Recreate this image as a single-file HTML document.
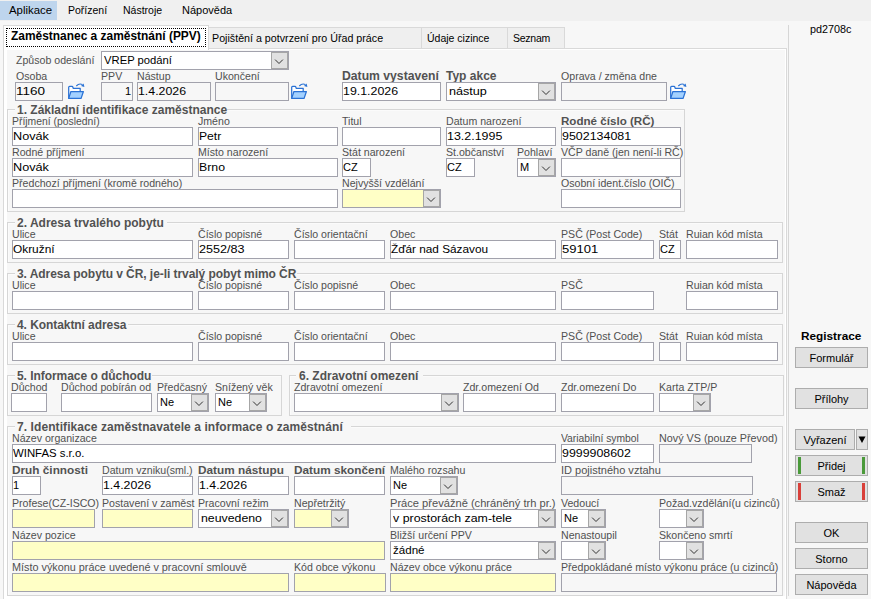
<!DOCTYPE html>
<html><head><meta charset="utf-8"><style>
html,body{margin:0;padding:0;width:871px;height:599px;overflow:hidden;background:#f7f7f7;position:relative}
.a{position:absolute;box-sizing:border-box}
.t{position:absolute;white-space:nowrap;line-height:20px;font-family:"Liberation Sans", sans-serif}
</style></head><body>
<div class="a" style="left:0px;top:0px;width:871px;height:21px;background:#f0f0f0;"></div><div class="a" style="left:0px;top:1px;width:57px;height:19px;background:#bed5ed;"></div><div class="t" style="left:9px;top:0px;font-size:11.4px;color:#000;">Aplikace</div><div class="t" style="left:68px;top:0px;font-size:10.5px;color:#000;">Pořízení</div><div class="t" style="left:123px;top:0px;font-size:10.5px;color:#000;">Nástroje</div><div class="t" style="left:182px;top:0px;font-size:11px;color:#000;">Nápověda</div><div class="a" style="left:788px;top:25px;width:1px;height:571px;background:#d6d6d6;"></div><div class="t" style="left:810px;top:19px;font-size:10.8px;color:#000;">pd2708c</div><div class="a" style="left:208px;top:27px;width:214px;height:22px;background:#efefef;border:1px solid #d9d9d9;"></div><div class="a" style="left:421px;top:27px;width:87px;height:22px;background:#efefef;border:1px solid #d9d9d9;"></div><div class="a" style="left:507px;top:27px;width:58px;height:22px;background:#efefef;border:1px solid #d9d9d9;"></div><div class="t" style="left:212px;top:28px;font-size:10.7px;color:#000;">Pojištění a potvrzení pro Úřad práce</div><div class="t" style="left:427px;top:28px;font-size:10.5px;color:#000;">Údaje cizince</div><div class="t" style="left:513px;top:28px;font-size:10.5px;color:#000;letter-spacing:-0.25px;">Seznam</div><div class="a" style="left:3px;top:48px;width:784px;height:593px;background:#fff;border:1px solid #d9d9d9;"></div><div class="a" style="left:7px;top:50px;width:778px;height:546px;background:#f7f7f7;"></div><div class="a" style="left:3px;top:25px;width:206px;height:25px;background:#fff;border:1px solid #d9d9d9;border-bottom:none;box-sizing:border-box"></div><div class="a" style="left:6px;top:28px;width:200px;height:19px;border:1px dotted #000;box-sizing:border-box"></div><div class="t" style="left:11px;top:26px;font-size:11.95px;color:#000;font-weight:bold;">Zaměstnanec a zaměstnání (PPV)</div><div class="t" style="left:16px;top:50px;font-size:10.6px;color:#505050;">Způsob odeslání</div><div class="a" style="left:101px;top:51px;width:188px;height:19px;background:#fff;border:1px solid #a2a2ac;"></div><div class="a" style="left:271px;top:52px;width:17px;height:17px;background:#e1e1e1;border:1px solid #a6a6a6;box-sizing:border-box"></div><svg class="a" style="left:271px;top:52px" width="17" height="17"><polyline points="4.1,7.6 8,11.5 11.9,7.6" fill="none" stroke="#333" stroke-width="1"/></svg><div class="t" style="left:104px;top:50px;font-size:11px;color:#000;transform:scaleX(1.023);transform-origin:0 0;">VREP podání</div><div class="t" style="left:16px;top:66px;font-size:10.6px;color:#505050;">Osoba</div><div class="a" style="left:15px;top:82px;width:48px;height:19px;background:#f7f7f7;border:1px solid #a2a2ac;"></div><div class="t" style="left:16px;top:81px;font-size:11px;color:#000;transform:scaleX(1.227);transform-origin:0 0;">1160</div><svg class="a" style="left:68px;top:82px" width="17" height="17" viewBox="0 0 17 17">
<path d="M0.7,16.4 V5.3 Q0.7,4.4 1.6,4.4 H4.1 Q4.6,4.4 4.8,5 L5.2,6.3 H12.2 V9.2" fill="#fff" stroke="#2a72d5" stroke-width="1.25" stroke-linejoin="round"/>
<path d="M0.7,16.4 L2.9,9.5 H15.4 L13.1,16.4 Z" fill="#a3d1ff" stroke="#2a72d5" stroke-width="1.25" stroke-linejoin="round"/>
<path d="M8.3,4.0 Q11.2,0.9 14.4,2.6" fill="none" stroke="#2a72d5" stroke-width="1.15"/>
<path d="M13.0,3.9 L16.4,5.0 L15.6,1.4 Z" fill="#2a72d5"/>
</svg><div class="t" style="left:101px;top:66px;font-size:10.6px;color:#505050;">PPV</div><div class="a" style="left:101px;top:82px;width:32px;height:19px;background:#f7f7f7;border:1px solid #a2a2ac;"></div><div class="t" style="left:101px;width:30px;text-align:right;top:81px;font-size:11px;color:#000">1</div><div class="t" style="left:137px;top:66px;font-size:10.6px;color:#505050;">Nástup</div><div class="a" style="left:137px;top:82px;width:74px;height:19px;background:#f7f7f7;border:1px solid #a2a2ac;"></div><div class="t" style="left:138px;top:81px;font-size:11px;color:#000;transform:scaleX(1.121);transform-origin:0 0;">1.4.2026</div><div class="t" style="left:215px;top:66px;font-size:10.6px;color:#505050;">Ukončení</div><div class="a" style="left:215px;top:82px;width:74px;height:19px;background:#f7f7f7;border:1px solid #a2a2ac;"></div><svg class="a" style="left:291px;top:82px" width="17" height="17" viewBox="0 0 17 17">
<path d="M0.7,16.4 V5.3 Q0.7,4.4 1.6,4.4 H4.1 Q4.6,4.4 4.8,5 L5.2,6.3 H12.2 V9.2" fill="#fff" stroke="#2a72d5" stroke-width="1.25" stroke-linejoin="round"/>
<path d="M0.7,16.4 L2.9,9.5 H15.4 L13.1,16.4 Z" fill="#a3d1ff" stroke="#2a72d5" stroke-width="1.25" stroke-linejoin="round"/>
<path d="M8.3,4.0 Q11.2,0.9 14.4,2.6" fill="none" stroke="#2a72d5" stroke-width="1.15"/>
<path d="M13.0,3.9 L16.4,5.0 L15.6,1.4 Z" fill="#2a72d5"/>
</svg><div class="t" style="left:342px;top:66px;font-size:12.2px;color:#525252;font-weight:bold;">Datum vystavení</div><div class="a" style="left:342px;top:82px;width:99px;height:19px;background:#fff;border:1px solid #a2a2ac;"></div><div class="t" style="left:343px;top:81px;font-size:11px;color:#000;transform:scaleX(1.125);transform-origin:0 0;">19.1.2026</div><div class="t" style="left:446px;top:66px;font-size:12px;color:#525252;font-weight:bold;">Typ akce</div><div class="a" style="left:446px;top:82px;width:110px;height:19px;background:#fff;border:1px solid #a2a2ac;"></div><div class="a" style="left:538px;top:83px;width:17px;height:17px;background:#e1e1e1;border:1px solid #a6a6a6;box-sizing:border-box"></div><svg class="a" style="left:538px;top:83px" width="17" height="17"><polyline points="4.1,7.6 8,11.5 11.9,7.6" fill="none" stroke="#333" stroke-width="1"/></svg><div class="t" style="left:449px;top:81px;font-size:11px;color:#000;transform:scaleX(1.147);transform-origin:0 0;">nástup</div><div class="t" style="left:561px;top:66px;font-size:10.6px;color:#505050;">Oprava / změna dne</div><div class="a" style="left:561px;top:82px;width:106px;height:19px;background:#f7f7f7;border:1px solid #a2a2ac;"></div><svg class="a" style="left:670px;top:82px" width="17" height="17" viewBox="0 0 17 17">
<path d="M0.7,16.4 V5.3 Q0.7,4.4 1.6,4.4 H4.1 Q4.6,4.4 4.8,5 L5.2,6.3 H12.2 V9.2" fill="#fff" stroke="#2a72d5" stroke-width="1.25" stroke-linejoin="round"/>
<path d="M0.7,16.4 L2.9,9.5 H15.4 L13.1,16.4 Z" fill="#a3d1ff" stroke="#2a72d5" stroke-width="1.25" stroke-linejoin="round"/>
<path d="M8.3,4.0 Q11.2,0.9 14.4,2.6" fill="none" stroke="#2a72d5" stroke-width="1.15"/>
<path d="M13.0,3.9 L16.4,5.0 L15.6,1.4 Z" fill="#2a72d5"/>
</svg><div class="a" style="left:7px;top:109px;width:678px;height:103px;border:1px solid #d6d6d6;box-shadow:inset 1px 1px 0 #fbfbfb"></div><div class="a" style="left:15px;top:103px;width:212px;height:12px;background:#f7f7f7"></div><div class="t" style="left:17px;top:100px;font-size:12px;color:#525252;font-weight:bold;letter-spacing:0px;">1. Základní identifikace zaměstnance</div><div class="t" style="left:12px;top:111px;font-size:10.6px;color:#505050;transform:scaleX(0.98);transform-origin:0 0;">Příjmení (poslední)</div><div class="a" style="left:12px;top:127px;width:181px;height:19px;background:#fff;border:1px solid #a2a2ac;"></div><div class="t" style="left:13px;top:126px;font-size:11px;color:#000;transform:scaleX(1.153);transform-origin:0 0;">Novák</div><div class="t" style="left:198px;top:111px;font-size:10.6px;color:#505050;">Jméno</div><div class="a" style="left:198px;top:127px;width:140px;height:19px;background:#fff;border:1px solid #a2a2ac;"></div><div class="t" style="left:199px;top:126px;font-size:11px;color:#000;transform:scaleX(1.105);transform-origin:0 0;">Petr</div><div class="t" style="left:342px;top:111px;font-size:10.6px;color:#505050;">Titul</div><div class="a" style="left:342px;top:127px;width:99px;height:19px;background:#fff;border:1px solid #a2a2ac;"></div><div class="t" style="left:446px;top:111px;font-size:10.6px;color:#505050;">Datum narození</div><div class="a" style="left:446px;top:127px;width:110px;height:19px;background:#fff;border:1px solid #a2a2ac;"></div><div class="t" style="left:447px;top:126px;font-size:11px;color:#000;transform:scaleX(1.131);transform-origin:0 0;">13.2.1995</div><div class="t" style="left:561px;top:111px;font-size:11.6px;color:#525252;font-weight:bold;">Rodné číslo (RČ)</div><div class="a" style="left:561px;top:127px;width:120px;height:19px;background:#fff;border:1px solid #a2a2ac;"></div><div class="t" style="left:562px;top:126px;font-size:11px;color:#000;transform:scaleX(1.131);transform-origin:0 0;">9502134081</div><div class="t" style="left:12px;top:142px;font-size:10.6px;color:#505050;">Rodné příjmení</div><div class="a" style="left:12px;top:158px;width:181px;height:19px;background:#fff;border:1px solid #a2a2ac;"></div><div class="t" style="left:13px;top:157px;font-size:11px;color:#000;transform:scaleX(1.153);transform-origin:0 0;">Novák</div><div class="t" style="left:198px;top:142px;font-size:10.6px;color:#505050;">Místo narození</div><div class="a" style="left:198px;top:158px;width:140px;height:19px;background:#fff;border:1px solid #a2a2ac;"></div><div class="t" style="left:199px;top:157px;font-size:11px;color:#000;transform:scaleX(1.118);transform-origin:0 0;">Brno</div><div class="t" style="left:342px;top:142px;font-size:10.6px;color:#505050;">Stát narození</div><div class="a" style="left:342px;top:158px;width:29px;height:19px;background:#fff;border:1px solid #a2a2ac;"></div><div class="t" style="left:343px;top:157px;font-size:11px;color:#000;transform:scaleX(1.0);transform-origin:0 0;">CZ</div><div class="t" style="left:446px;top:142px;font-size:10.6px;color:#505050;">St.občanství</div><div class="a" style="left:446px;top:158px;width:29px;height:19px;background:#fff;border:1px solid #a2a2ac;"></div><div class="t" style="left:447px;top:157px;font-size:11px;color:#000;transform:scaleX(1.0);transform-origin:0 0;">CZ</div><div class="t" style="left:517px;top:142px;font-size:10.6px;color:#505050;">Pohlaví</div><div class="a" style="left:517px;top:158px;width:39px;height:19px;background:#fff;border:1px solid #a2a2ac;"></div><div class="a" style="left:538px;top:159px;width:17px;height:17px;background:#e1e1e1;border:1px solid #a6a6a6;box-sizing:border-box"></div><svg class="a" style="left:538px;top:159px" width="17" height="17"><polyline points="4.1,7.6 8,11.5 11.9,7.6" fill="none" stroke="#333" stroke-width="1"/></svg><div class="t" style="left:520px;top:157px;font-size:11px;color:#000;transform:scaleX(1.0);transform-origin:0 0;">M</div><div class="t" style="left:561px;top:142px;font-size:10.6px;color:#505050;">VČP daně (jen není-li RČ)</div><div class="a" style="left:561px;top:158px;width:120px;height:19px;background:#fff;border:1px solid #a2a2ac;"></div><div class="t" style="left:12px;top:173px;font-size:10.6px;color:#505050;">Předchozí příjmení (kromě rodného)</div><div class="a" style="left:12px;top:189px;width:326px;height:19px;background:#fff;border:1px solid #a2a2ac;"></div><div class="t" style="left:342px;top:173px;font-size:10.6px;color:#505050;">Nejvyšší vzdělání</div><div class="a" style="left:342px;top:189px;width:99px;height:19px;background:#ffffc6;border:1px solid #a2a2ac;"></div><div class="a" style="left:423px;top:190px;width:17px;height:17px;background:#e1e1e1;border:1px solid #a6a6a6;box-sizing:border-box"></div><svg class="a" style="left:423px;top:190px" width="17" height="17"><polyline points="4.1,7.6 8,11.5 11.9,7.6" fill="none" stroke="#333" stroke-width="1"/></svg><div class="t" style="left:561px;top:173px;font-size:10.6px;color:#505050;">Osobní ident.číslo (OIČ)</div><div class="a" style="left:561px;top:189px;width:120px;height:19px;background:#fff;border:1px solid #a2a2ac;"></div><div class="a" style="left:7px;top:222px;width:776px;height:41px;border:1px solid #d6d6d6;box-shadow:inset 1px 1px 0 #fbfbfb"></div><div class="a" style="left:15px;top:216px;width:152px;height:12px;background:#f7f7f7"></div><div class="t" style="left:17px;top:213px;font-size:12px;color:#525252;font-weight:bold;letter-spacing:0px;">2. Adresa trvalého pobytu</div><div class="t" style="left:12px;top:224px;font-size:10.6px;color:#505050;">Ulice</div><div class="a" style="left:12px;top:240px;width:181px;height:19px;background:#fff;border:1px solid #a2a2ac;"></div><div class="t" style="left:13px;top:239px;font-size:11px;color:#000;transform:scaleX(1.079);transform-origin:0 0;">Okružní</div><div class="t" style="left:198px;top:224px;font-size:10.6px;color:#505050;">Číslo popisné</div><div class="a" style="left:198px;top:240px;width:91px;height:19px;background:#fff;border:1px solid #a2a2ac;"></div><div class="t" style="left:199px;top:239px;font-size:11px;color:#000;transform:scaleX(1.145);transform-origin:0 0;">2552/83</div><div class="t" style="left:294px;top:224px;font-size:10.6px;color:#505050;">Číslo orientační</div><div class="a" style="left:294px;top:240px;width:91px;height:19px;background:#fff;border:1px solid #a2a2ac;"></div><div class="t" style="left:390px;top:224px;font-size:10.6px;color:#505050;">Obec</div><div class="a" style="left:390px;top:240px;width:166px;height:19px;background:#fff;border:1px solid #a2a2ac;"></div><div class="t" style="left:391px;top:239px;font-size:11px;color:#000;transform:scaleX(1.072);transform-origin:0 0;">Žďár nad Sázavou</div><div class="t" style="left:561px;top:224px;font-size:10.6px;color:#505050;">PSČ (Post Code)</div><div class="a" style="left:561px;top:240px;width:93px;height:19px;background:#fff;border:1px solid #a2a2ac;"></div><div class="t" style="left:562px;top:239px;font-size:11px;color:#000;transform:scaleX(1.186);transform-origin:0 0;">59101</div><div class="t" style="left:659px;top:224px;font-size:10.6px;color:#505050;">Stát</div><div class="a" style="left:659px;top:240px;width:22px;height:19px;background:#fff;border:1px solid #a2a2ac;"></div><div class="t" style="left:660px;top:239px;font-size:11px;color:#000;transform:scaleX(1.0);transform-origin:0 0;">CZ</div><div class="t" style="left:686px;top:224px;font-size:10.6px;color:#505050;">Ruian kód místa</div><div class="a" style="left:686px;top:240px;width:92px;height:19px;background:#fff;border:1px solid #a2a2ac;"></div><div class="a" style="left:7px;top:273px;width:776px;height:41px;border:1px solid #d6d6d6;box-shadow:inset 1px 1px 0 #fbfbfb"></div><div class="a" style="left:15px;top:267px;width:282px;height:12px;background:#f7f7f7"></div><div class="t" style="left:17px;top:264px;font-size:12px;color:#525252;font-weight:bold;letter-spacing:-0.06px;">3. Adresa pobytu v ČR, je-li trvalý pobyt mimo ČR</div><div class="t" style="left:12px;top:275px;font-size:10.6px;color:#505050;">Ulice</div><div class="a" style="left:12px;top:291px;width:181px;height:19px;background:#fff;border:1px solid #a2a2ac;"></div><div class="t" style="left:198px;top:275px;font-size:10.6px;color:#505050;">Číslo popisné</div><div class="a" style="left:198px;top:291px;width:91px;height:19px;background:#fff;border:1px solid #a2a2ac;"></div><div class="t" style="left:294px;top:275px;font-size:10.6px;color:#505050;">Číslo popisné</div><div class="a" style="left:294px;top:291px;width:91px;height:19px;background:#fff;border:1px solid #a2a2ac;"></div><div class="t" style="left:390px;top:275px;font-size:10.6px;color:#505050;">Obec</div><div class="a" style="left:390px;top:291px;width:166px;height:19px;background:#fff;border:1px solid #a2a2ac;"></div><div class="t" style="left:561px;top:275px;font-size:10.6px;color:#505050;">PSČ</div><div class="a" style="left:561px;top:291px;width:93px;height:19px;background:#fff;border:1px solid #a2a2ac;"></div><div class="t" style="left:686px;top:275px;font-size:10.6px;color:#505050;">Ruian kód místa</div><div class="a" style="left:686px;top:291px;width:92px;height:19px;background:#fff;border:1px solid #a2a2ac;"></div><div class="a" style="left:7px;top:324px;width:776px;height:41px;border:1px solid #d6d6d6;box-shadow:inset 1px 1px 0 #fbfbfb"></div><div class="a" style="left:15px;top:318px;width:113px;height:12px;background:#f7f7f7"></div><div class="t" style="left:17px;top:315px;font-size:12px;color:#525252;font-weight:bold;letter-spacing:-0.07px;">4. Kontaktní adresa</div><div class="t" style="left:12px;top:326px;font-size:10.6px;color:#505050;">Ulice</div><div class="a" style="left:12px;top:342px;width:181px;height:19px;background:#fff;border:1px solid #a2a2ac;"></div><div class="t" style="left:198px;top:326px;font-size:10.6px;color:#505050;">Číslo popisné</div><div class="a" style="left:198px;top:342px;width:91px;height:19px;background:#fff;border:1px solid #a2a2ac;"></div><div class="t" style="left:294px;top:326px;font-size:10.6px;color:#505050;">Číslo orientační</div><div class="a" style="left:294px;top:342px;width:91px;height:19px;background:#fff;border:1px solid #a2a2ac;"></div><div class="t" style="left:390px;top:326px;font-size:10.6px;color:#505050;">Obec</div><div class="a" style="left:390px;top:342px;width:166px;height:19px;background:#fff;border:1px solid #a2a2ac;"></div><div class="t" style="left:561px;top:326px;font-size:10.6px;color:#505050;">PSČ (Post Code)</div><div class="a" style="left:561px;top:342px;width:93px;height:19px;background:#fff;border:1px solid #a2a2ac;"></div><div class="t" style="left:659px;top:326px;font-size:10.6px;color:#505050;">Stát</div><div class="a" style="left:659px;top:342px;width:22px;height:19px;background:#fff;border:1px solid #a2a2ac;"></div><div class="t" style="left:686px;top:326px;font-size:10.6px;color:#505050;">Ruian kód místa</div><div class="a" style="left:686px;top:342px;width:92px;height:19px;background:#fff;border:1px solid #a2a2ac;"></div><div class="a" style="left:7px;top:375px;width:275px;height:41px;border:1px solid #d6d6d6;box-shadow:inset 1px 1px 0 #fbfbfb"></div><div class="a" style="left:15px;top:369px;width:137px;height:12px;background:#f7f7f7"></div><div class="t" style="left:17px;top:366px;font-size:12px;color:#525252;font-weight:bold;letter-spacing:-0.05px;">5. Informace o důchodu</div><div class="t" style="left:11px;top:377px;font-size:10.6px;color:#505050;">Důchod</div><div class="a" style="left:11px;top:393px;width:36px;height:19px;background:#fff;border:1px solid #a2a2ac;"></div><div class="t" style="left:61px;top:377px;font-size:10.6px;color:#505050;">Důchod pobírán od</div><div class="a" style="left:61px;top:393px;width:91px;height:19px;background:#fff;border:1px solid #a2a2ac;"></div><div class="t" style="left:157px;top:377px;font-size:10.6px;color:#505050;">Předčasný</div><div class="a" style="left:157px;top:393px;width:52px;height:19px;background:#fff;border:1px solid #a2a2ac;"></div><div class="a" style="left:191px;top:394px;width:17px;height:17px;background:#e1e1e1;border:1px solid #a6a6a6;box-sizing:border-box"></div><svg class="a" style="left:191px;top:394px" width="17" height="17"><polyline points="4.1,7.6 8,11.5 11.9,7.6" fill="none" stroke="#333" stroke-width="1"/></svg><div class="t" style="left:160px;top:392px;font-size:11px;color:#000;transform:scaleX(1.0);transform-origin:0 0;">Ne</div><div class="t" style="left:215px;top:377px;font-size:10.6px;color:#505050;">Snížený věk</div><div class="a" style="left:215px;top:393px;width:52px;height:19px;background:#fff;border:1px solid #a2a2ac;"></div><div class="a" style="left:249px;top:394px;width:17px;height:17px;background:#e1e1e1;border:1px solid #a6a6a6;box-sizing:border-box"></div><svg class="a" style="left:249px;top:394px" width="17" height="17"><polyline points="4.1,7.6 8,11.5 11.9,7.6" fill="none" stroke="#333" stroke-width="1"/></svg><div class="t" style="left:218px;top:392px;font-size:11px;color:#000;transform:scaleX(1.0);transform-origin:0 0;">Ne</div><div class="a" style="left:289px;top:375px;width:495px;height:41px;border:1px solid #d6d6d6;box-shadow:inset 1px 1px 0 #fbfbfb"></div><div class="a" style="left:296px;top:369px;width:127px;height:12px;background:#f7f7f7"></div><div class="t" style="left:299px;top:366px;font-size:12px;color:#525252;font-weight:bold;">6. Zdravotní omezení</div><div class="t" style="left:294px;top:377px;font-size:10.6px;color:#505050;">Zdravotní omezení</div><div class="a" style="left:294px;top:393px;width:165px;height:19px;background:#fff;border:1px solid #a2a2ac;"></div><div class="a" style="left:441px;top:394px;width:17px;height:17px;background:#e1e1e1;border:1px solid #a6a6a6;box-sizing:border-box"></div><svg class="a" style="left:441px;top:394px" width="17" height="17"><polyline points="4.1,7.6 8,11.5 11.9,7.6" fill="none" stroke="#333" stroke-width="1"/></svg><div class="t" style="left:463px;top:377px;font-size:10.6px;color:#505050;">Zdr.omezení Od</div><div class="a" style="left:463px;top:393px;width:93px;height:19px;background:#fff;border:1px solid #a2a2ac;"></div><div class="t" style="left:561px;top:377px;font-size:10.6px;color:#505050;">Zdr.omezení Do</div><div class="a" style="left:561px;top:393px;width:93px;height:19px;background:#fff;border:1px solid #a2a2ac;"></div><div class="t" style="left:659px;top:377px;font-size:10.6px;color:#505050;">Karta ZTP/P</div><div class="a" style="left:659px;top:393px;width:52px;height:19px;background:#fff;border:1px solid #a2a2ac;"></div><div class="a" style="left:693px;top:394px;width:17px;height:17px;background:#e1e1e1;border:1px solid #a6a6a6;box-sizing:border-box"></div><svg class="a" style="left:693px;top:394px" width="17" height="17"><polyline points="4.1,7.6 8,11.5 11.9,7.6" fill="none" stroke="#333" stroke-width="1"/></svg><div class="a" style="left:7px;top:426px;width:776px;height:170px;border:1px solid #d6d6d6;box-shadow:inset 1px 1px 0 #fbfbfb"></div><div class="a" style="left:15px;top:420px;width:336px;height:12px;background:#f7f7f7"></div><div class="t" style="left:17px;top:417px;font-size:12px;color:#525252;font-weight:bold;letter-spacing:0.08px;">7. Identifikace zaměstnavatele a informace o zaměstnání</div><div class="t" style="left:12px;top:428px;font-size:10.6px;color:#505050;">Název organizace</div><div class="a" style="left:12px;top:444px;width:544px;height:19px;background:#fff;border:1px solid #a2a2ac;"></div><div class="t" style="left:13px;top:443px;font-size:11px;color:#000;transform:scaleX(1.034);transform-origin:0 0;">WINFAS s.r.o.</div><div class="t" style="left:561px;top:428px;font-size:10.6px;color:#505050;transform:scaleX(0.975);transform-origin:0 0;">Variabilní symbol</div><div class="a" style="left:561px;top:444px;width:93px;height:19px;background:#fff;border:1px solid #a2a2ac;"></div><div class="t" style="left:562px;top:443px;font-size:11px;color:#000;transform:scaleX(1.126);transform-origin:0 0;">9999908602</div><div class="t" style="left:659px;top:428px;font-size:10.6px;color:#505050;transform:scaleX(1.017);transform-origin:0 0;">Nový VS (pouze Převod)</div><div class="a" style="left:659px;top:444px;width:93px;height:19px;background:#f7f7f7;border:1px solid #a2a2ac;"></div><div class="t" style="left:12px;top:460px;font-size:11.8px;color:#525252;font-weight:bold;">Druh činnosti</div><div class="a" style="left:12px;top:476px;width:29px;height:19px;background:#fff;border:1px solid #a2a2ac;"></div><div class="t" style="left:13px;top:475px;font-size:11px;color:#000;transform:scaleX(1.0);transform-origin:0 0;">1</div><div class="t" style="left:102px;top:460px;font-size:10.6px;color:#505050;">Datum vzniku(sml.)</div><div class="a" style="left:102px;top:476px;width:91px;height:19px;background:#fff;border:1px solid #a2a2ac;"></div><div class="t" style="left:103px;top:475px;font-size:11px;color:#000;transform:scaleX(1.121);transform-origin:0 0;">1.4.2026</div><div class="t" style="left:198px;top:460px;font-size:11.8px;color:#525252;font-weight:bold;">Datum nástupu</div><div class="a" style="left:198px;top:476px;width:91px;height:19px;background:#fff;border:1px solid #a2a2ac;"></div><div class="t" style="left:199px;top:475px;font-size:11px;color:#000;transform:scaleX(1.121);transform-origin:0 0;">1.4.2026</div><div class="t" style="left:294px;top:460px;font-size:11.8px;color:#525252;font-weight:bold;">Datum skončení</div><div class="a" style="left:294px;top:476px;width:91px;height:19px;background:#fff;border:1px solid #a2a2ac;"></div><div class="t" style="left:390px;top:460px;font-size:10.6px;color:#505050;">Malého rozsahu</div><div class="a" style="left:390px;top:476px;width:68px;height:19px;background:#fff;border:1px solid #a2a2ac;"></div><div class="a" style="left:440px;top:477px;width:17px;height:17px;background:#e1e1e1;border:1px solid #a6a6a6;box-sizing:border-box"></div><svg class="a" style="left:440px;top:477px" width="17" height="17"><polyline points="4.1,7.6 8,11.5 11.9,7.6" fill="none" stroke="#333" stroke-width="1"/></svg><div class="t" style="left:393px;top:475px;font-size:11px;color:#000;transform:scaleX(1.0);transform-origin:0 0;">Ne</div><div class="t" style="left:561px;top:460px;font-size:10.6px;color:#505050;transform:scaleX(1.04);transform-origin:0 0;">ID pojistného vztahu</div><div class="a" style="left:561px;top:476px;width:192px;height:19px;background:#f7f7f7;border:1px solid #a2a2ac;"></div><div class="t" style="left:12px;top:493px;font-size:10.6px;color:#505050;">Profese(CZ-ISCO)</div><div class="a" style="left:12px;top:509px;width:83px;height:19px;background:#ffffc6;border:1px solid #a2a2ac;"></div><div class="t" style="left:102px;top:493px;font-size:10.6px;color:#505050;">Postavení v zaměst</div><div class="a" style="left:102px;top:509px;width:91px;height:19px;background:#ffffc6;border:1px solid #a2a2ac;"></div><div class="t" style="left:198px;top:493px;font-size:10.6px;color:#505050;">Pracovní režim</div><div class="a" style="left:198px;top:509px;width:91px;height:19px;background:#fff;border:1px solid #a2a2ac;"></div><div class="a" style="left:271px;top:510px;width:17px;height:17px;background:#e1e1e1;border:1px solid #a6a6a6;box-sizing:border-box"></div><svg class="a" style="left:271px;top:510px" width="17" height="17"><polyline points="4.1,7.6 8,11.5 11.9,7.6" fill="none" stroke="#333" stroke-width="1"/></svg><div class="t" style="left:201px;top:508px;font-size:11px;color:#000;transform:scaleX(1.119);transform-origin:0 0;">neuvedeno</div><div class="t" style="left:294px;top:493px;font-size:10.6px;color:#505050;">Nepřetržitý</div><div class="a" style="left:294px;top:509px;width:55px;height:19px;background:#ffffc6;border:1px solid #a2a2ac;"></div><div class="a" style="left:331px;top:510px;width:17px;height:17px;background:#e1e1e1;border:1px solid #a6a6a6;box-sizing:border-box"></div><svg class="a" style="left:331px;top:510px" width="17" height="17"><polyline points="4.1,7.6 8,11.5 11.9,7.6" fill="none" stroke="#333" stroke-width="1"/></svg><div class="t" style="left:390px;top:493px;font-size:10.6px;color:#505050;transform:scaleX(1.049);transform-origin:0 0;">Práce převážně (chráněný trh pr.)</div><div class="a" style="left:390px;top:509px;width:166px;height:19px;background:#fff;border:1px solid #a2a2ac;"></div><div class="a" style="left:538px;top:510px;width:17px;height:17px;background:#e1e1e1;border:1px solid #a6a6a6;box-sizing:border-box"></div><svg class="a" style="left:538px;top:510px" width="17" height="17"><polyline points="4.1,7.6 8,11.5 11.9,7.6" fill="none" stroke="#333" stroke-width="1"/></svg><div class="t" style="left:393px;top:508px;font-size:11px;color:#000;transform:scaleX(1.125);transform-origin:0 0;">v prostorách zam-tele</div><div class="t" style="left:561px;top:493px;font-size:10.6px;color:#505050;">Vedoucí</div><div class="a" style="left:561px;top:509px;width:45px;height:19px;background:#fff;border:1px solid #a2a2ac;"></div><div class="a" style="left:588px;top:510px;width:17px;height:17px;background:#e1e1e1;border:1px solid #a6a6a6;box-sizing:border-box"></div><svg class="a" style="left:588px;top:510px" width="17" height="17"><polyline points="4.1,7.6 8,11.5 11.9,7.6" fill="none" stroke="#333" stroke-width="1"/></svg><div class="t" style="left:564px;top:508px;font-size:11px;color:#000;transform:scaleX(1.0);transform-origin:0 0;">Ne</div><div class="t" style="left:659px;top:493px;font-size:10.6px;color:#505050;">Požad.vzdělání(u cizinců)</div><div class="a" style="left:659px;top:509px;width:45px;height:19px;background:#fff;border:1px solid #a2a2ac;"></div><div class="a" style="left:686px;top:510px;width:17px;height:17px;background:#e1e1e1;border:1px solid #a6a6a6;box-sizing:border-box"></div><svg class="a" style="left:686px;top:510px" width="17" height="17"><polyline points="4.1,7.6 8,11.5 11.9,7.6" fill="none" stroke="#333" stroke-width="1"/></svg><div class="t" style="left:12px;top:525px;font-size:10.6px;color:#505050;">Název pozice</div><div class="a" style="left:12px;top:541px;width:373px;height:19px;background:#ffffc6;border:1px solid #a2a2ac;"></div><div class="t" style="left:390px;top:525px;font-size:10.6px;color:#505050;">Bližší určení PPV</div><div class="a" style="left:390px;top:541px;width:166px;height:19px;background:#fff;border:1px solid #a2a2ac;"></div><div class="a" style="left:538px;top:542px;width:17px;height:17px;background:#e1e1e1;border:1px solid #a6a6a6;box-sizing:border-box"></div><svg class="a" style="left:538px;top:542px" width="17" height="17"><polyline points="4.1,7.6 8,11.5 11.9,7.6" fill="none" stroke="#333" stroke-width="1"/></svg><div class="t" style="left:393px;top:540px;font-size:11px;color:#000;transform:scaleX(1.053);transform-origin:0 0;">žádné</div><div class="t" style="left:561px;top:525px;font-size:10.6px;color:#505050;">Nenastoupil</div><div class="a" style="left:561px;top:541px;width:45px;height:19px;background:#fff;border:1px solid #a2a2ac;"></div><div class="a" style="left:588px;top:542px;width:17px;height:17px;background:#e1e1e1;border:1px solid #a6a6a6;box-sizing:border-box"></div><svg class="a" style="left:588px;top:542px" width="17" height="17"><polyline points="4.1,7.6 8,11.5 11.9,7.6" fill="none" stroke="#333" stroke-width="1"/></svg><div class="t" style="left:659px;top:525px;font-size:10.6px;color:#505050;">Skončeno smrtí</div><div class="a" style="left:659px;top:541px;width:45px;height:19px;background:#fff;border:1px solid #a2a2ac;"></div><div class="a" style="left:686px;top:542px;width:17px;height:17px;background:#e1e1e1;border:1px solid #a6a6a6;box-sizing:border-box"></div><svg class="a" style="left:686px;top:542px" width="17" height="17"><polyline points="4.1,7.6 8,11.5 11.9,7.6" fill="none" stroke="#333" stroke-width="1"/></svg><div class="t" style="left:12px;top:557px;font-size:10.6px;color:#505050;transform:scaleX(1.022);transform-origin:0 0;">Místo výkonu práce uvedené v pracovní smlouvě</div><div class="a" style="left:12px;top:573px;width:277px;height:19px;background:#ffffc6;border:1px solid #a2a2ac;"></div><div class="t" style="left:294px;top:557px;font-size:10.6px;color:#505050;">Kód obce výkonu</div><div class="a" style="left:294px;top:573px;width:92px;height:19px;background:#ffffc6;border:1px solid #a2a2ac;"></div><div class="t" style="left:390px;top:557px;font-size:10.6px;color:#505050;">Název obce výkonu práce</div><div class="a" style="left:390px;top:573px;width:166px;height:19px;background:#ffffc6;border:1px solid #a2a2ac;"></div><div class="t" style="left:561px;top:557px;font-size:10.6px;color:#505050;">Předpokládané místo výkonu práce (u cizinců)</div><div class="a" style="left:561px;top:573px;width:216px;height:19px;background:#f7f7f7;border:1px solid #a2a2ac;"></div><div class="t" style="left:801px;top:326px;font-size:11.8px;color:#000;font-weight:bold;">Registrace</div><div class="a" style="left:795px;top:347px;width:73px;height:21px;background:#e1e1e1;border:1px solid #adadad;"></div><div class="t" style="left:795px;width:73px;text-align:center;top:348px;font-size:11px;color:#000;">Formulář</div><div class="a" style="left:795px;top:388px;width:73px;height:21px;background:#e1e1e1;border:1px solid #adadad;"></div><div class="t" style="left:795px;width:73px;text-align:center;top:389px;font-size:11px;color:#000;">Přílohy</div><div class="a" style="left:795px;top:429px;width:60px;height:21px;background:#e1e1e1;border:1px solid #adadad;"></div><div class="t" style="left:795px;width:60px;text-align:center;top:430px;font-size:11px;color:#000;">Vyřazení</div><div class="a" style="left:856px;top:429px;width:12px;height:21px;background:#e1e1e1;border:1px solid #adadad;"></div><svg class="a" style="left:856px;top:429px" width="12" height="21"><polygon points="2.5,7.5 9.5,7.5 6,14" fill="#000"/></svg><div class="a" style="left:795px;top:455px;width:73px;height:21px;background:#e1e1e1;border:1px solid #adadad;"></div><div class="a" style="left:798px;top:457px;width:3px;height:17px;background:#4a9a3a;"></div><div class="a" style="left:862px;top:457px;width:3px;height:17px;background:#4a9a3a;"></div><div class="t" style="left:795px;width:73px;text-align:center;top:456px;font-size:11px;color:#000;">Přidej</div><div class="a" style="left:795px;top:481px;width:73px;height:21px;background:#e1e1e1;border:1px solid #adadad;"></div><div class="a" style="left:798px;top:483px;width:3px;height:17px;background:#d9403a;"></div><div class="a" style="left:862px;top:483px;width:3px;height:17px;background:#d9403a;"></div><div class="t" style="left:795px;width:73px;text-align:center;top:482px;font-size:11px;color:#000;">Smaž</div><div class="a" style="left:795px;top:522px;width:73px;height:21px;background:#e1e1e1;border:1px solid #adadad;"></div><div class="t" style="left:795px;width:73px;text-align:center;top:523px;font-size:11px;color:#000;">OK</div><div class="a" style="left:795px;top:548px;width:73px;height:21px;background:#e1e1e1;border:1px solid #adadad;"></div><div class="t" style="left:795px;width:73px;text-align:center;top:549px;font-size:11px;color:#000;">Storno</div><div class="a" style="left:795px;top:574px;width:73px;height:21px;background:#e1e1e1;border:1px solid #adadad;"></div><div class="t" style="left:795px;width:73px;text-align:center;top:575px;font-size:11px;color:#000;">Nápověda</div>
</body></html>
